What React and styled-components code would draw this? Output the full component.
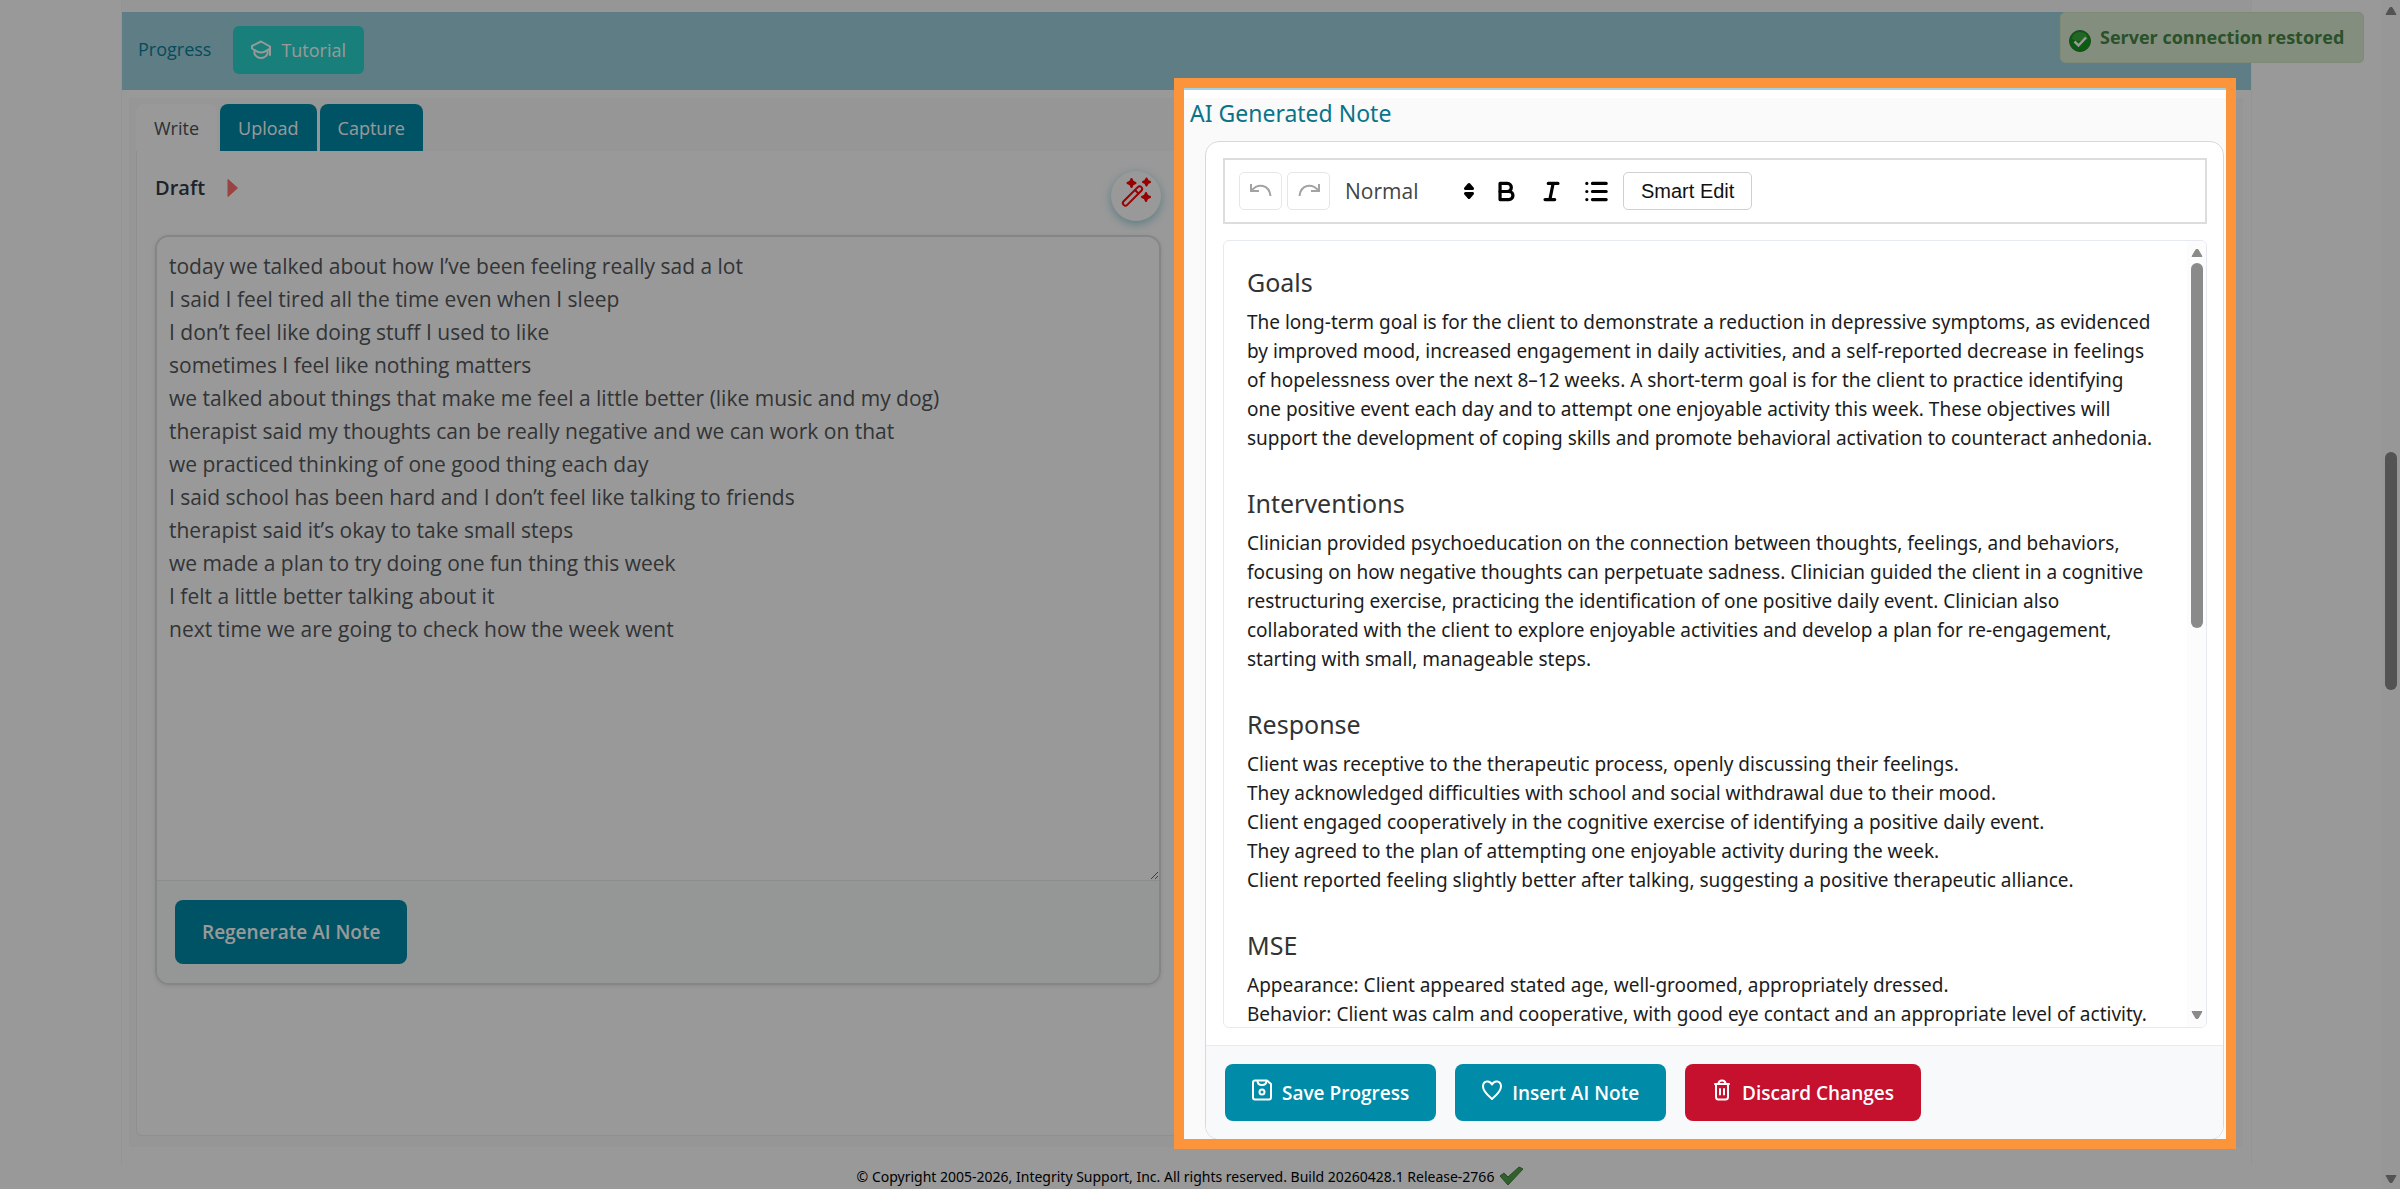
import React, { useState } from "react";
import styled, { createGlobalStyle } from "styled-components";

const GlobalStyle = createGlobalStyle`
  * {
    box-sizing: border-box;
  }
  body {
    margin: 0;
    overflow: hidden;
    background: #fff;
    font-family: "Open Sans", "Noto Sans", sans-serif;
    color: #212529;
  }
  button, select, textarea {
    font-family: inherit;
  }
  h2, h3, p {
    margin: 0;
  }
`;

const draftText = `today we talked about how I’ve been feeling really sad a lot
I said I feel tired all the time even when I sleep
I don’t feel like doing stuff I used to like
sometimes I feel like nothing matters
we talked about things that make me feel a little better (like music and my dog)
therapist said my thoughts can be really negative and we can work on that
we practiced thinking of one good thing each day
I said school has been hard and I don’t feel like talking to friends
therapist said it’s okay to take small steps
we made a plan to try doing one fun thing this week
I felt a little better talking about it
next time we are going to check how the week went`;

const sections = [
  {
    title: "Goals",
    lines: [
      "The long-term goal is for the client to demonstrate a reduction in depressive symptoms, as evidenced by improved mood, increased engagement in daily activities, and a self-reported decrease in feelings of hopelessness over the next 8–12 weeks. A short-term goal is for the client to practice identifying one positive event each day and to attempt one enjoyable activity this week. These objectives will support the development of coping skills and promote behavioral activation to counteract anhedonia.",
    ],
  },
  {
    title: "Interventions",
    lines: [
      "Clinician provided psychoeducation on the connection between thoughts, feelings, and behaviors, focusing on how negative thoughts can perpetuate sadness. Clinician guided the client in a cognitive restructuring exercise, practicing the identification of one positive daily event. Clinician also collaborated with the client to explore enjoyable activities and develop a plan for re-engagement, starting with small, manageable steps.",
    ],
  },
  {
    title: "Response",
    lines: [
      "Client was receptive to the therapeutic process, openly discussing their feelings.",
      "They acknowledged difficulties with school and social withdrawal due to their mood.",
      "Client engaged cooperatively in the cognitive exercise of identifying a positive daily event.",
      "They agreed to the plan of attempting one enjoyable activity during the week.",
      "Client reported feeling slightly better after talking, suggesting a positive therapeutic alliance.",
    ],
  },
  {
    title: "MSE",
    lines: [
      "Appearance: Client appeared stated age, well-groomed, appropriately dressed.",
      "Behavior: Client was calm and cooperative, with good eye contact and an appropriate level of activity.",
    ],
  },
];

const tabs = ["Write", "Upload", "Capture"];

/* icons */

const CapIcon = () => (
  <svg width="20" height="20" viewBox="0 0 20 20" fill="none" stroke="currentColor" strokeWidth="2" strokeLinejoin="round" strokeLinecap="round">
    <path d="M19 15V6.500L10 1.500 1 6v2.500l5 3q4 2 8 0l5-3" />
    <path d="M3.500 10.500V14q2.500 4 6.500 4t6.500-4v-3.500" />
  </svg>
);

const WandIcon = () => (
  <svg width="30" height="30" viewBox="0 0 30 30">
    <g fill="none" stroke="#f00" strokeWidth="2" strokeLinejoin="round">
      <rect x="-2.500" y="-12.500" width="5" height="25" rx="2.500" transform="translate(11.500 19) rotate(45)" />
      <path d="m14 13 3.500 3.500" />
    </g>
    <g fill="#f00" stroke="#f00" strokeWidth="2" strokeLinejoin="round">
      <path d="m10.500 2 1.300 2.700L14.500 6l-2.700 1.300-1.300 2.700-1.300-2.700L6.500 6l2.700-1.300z" />
      <path d="m25.500 1.500 1.200 2.300L29 5l-2.300 1.200-1.200 2.300-1.200-2.300L22 5l2.300-1.200z" />
      <path d="m25 16 1.300 2.700L29 20l-2.700 1.300L25 24l-1.300-2.700L21 20l2.700-1.300z" />
    </g>
  </svg>
);

const UndoIcon = ({ flip }) => (
  <svg width="24" height="18" viewBox="0 0 24 18" fill="none" stroke="#a3a3a3" strokeWidth="2">
    <g transform={flip ? "translate(24 0) scale(-1 1)" : undefined}>
      <path d="M2 2v7h8" />
      <path d="M2.500 8.500C9 1 20 2 21.500 14" />
    </g>
  </svg>
);

const BoldIcon = () => (
  <svg width="29" height="29" viewBox="0 0 18 18" fill="none" stroke="#000" strokeWidth="2" strokeLinejoin="round">
    <path d="M5 4h4.500a2.500 2.500 0 0 1 0 5H5z" />
    <path d="M5 9h5.500a2.500 2.500 0 0 1 0 5H5z" />
  </svg>
);

const ItalicIcon = () => (
  <svg width="29" height="29" viewBox="0 0 18 18" fill="none" stroke="#000" strokeWidth="2" strokeLinecap="round">
    <path d="M7 4h6M5 14h6M8 14l2-10" />
  </svg>
);

const ListIcon = () => (
  <svg width="29" height="29" viewBox="0 0 18 18" fill="none" stroke="#000" strokeWidth="2" strokeLinecap="round">
    <path d="M6.500 4H15M6.500 9H15M6.500 14H15M3 4h0M3 9h0M3 14h0" />
  </svg>
);

const SaveIcon = () => (
  <svg width="20" height="22" viewBox="0 0 20 22" fill="none" stroke="currentColor" strokeWidth="2" strokeLinejoin="round">
    <path d="M3 1.500h12L19 5v13.500q0 2-2 2H3q-2 0-2-2v-15q0-2 2-2z" />
    <path d="M5.500 1.500q0 4.500 4.500 4.500t4.500-4.500" />
    <circle cx="10" cy="13" r="2.500" />
  </svg>
);

const HeartIcon = () => (
  <svg width="20" height="22" viewBox="0 0 20 22" fill="none" stroke="currentColor" strokeWidth="2" strokeLinejoin="round">
    <path d="M10 20C6 16.500 1 12.500 1 7.500 1 2 7.500.500 10 5.500 12.500.500 19 2 19 7.500 19 12.500 14 16.500 10 20z" />
  </svg>
);

const TrashIcon = () => (
  <svg width="20" height="22" viewBox="0 0 20 22" fill="none" stroke="currentColor" strokeWidth="2" strokeLinejoin="round" strokeLinecap="round">
    <path d="M3 5h14M4 5v13q0 2.500 2.500 2.500h7q2.500 0 2.500-2.500V5M6.500 5q0-3.500 3.500-3.500T13.500 5" />
    <path d="M8 10v5.500M12 10v5.500" />
  </svg>
);

const OkIcon = () => (
  <svg width="22" height="22" viewBox="0 0 22 22">
    <circle cx="11" cy="11" r="10.500" fill="#129a1c" stroke="#2b7a2f" />
    <path d="M3 9a8 7 0 0 1 16 0q-8 4-16 0z" fill="#5ab85c" opacity=".6" />
    <path d="m5.500 11.500 4 4 7.500-8" fill="none" stroke="#fff" strokeWidth="2.500" />
  </svg>
);

const TickIcon = () => (
  <svg width="26" height="20" viewBox="0 0 26 20">
    <path d="m1 10 4-3 4 4L20 1l4 2L9 19z" fill="#53a14b" stroke="#3d7f38" />
  </svg>
);

const Arrow = ({ down }) => (
  <svg width="12" height="10" viewBox="0 0 12 10">
    <path d={down ? "M1 1.500h10L7 8.500H5z" : "M5 1.500h2l4 7H1z"} fill="#8a8a8a" stroke="#8a8a8a" strokeLinejoin="round" />
  </svg>
);

const App = () => {
  const [activeTab, setActiveTab] = useState("Write");
  const [draft, setDraft] = useState(draftText);

  return (
    <Page>
      <GlobalStyle />
      <Main>
        <Container>
          <Header>
            <HeaderTitle>Progress</HeaderTitle>
            <TutorialButton type="button">
              <CapIcon />
              Tutorial
            </TutorialButton>
          </Header>
          <Content>
            <DraftColumn>
              <Tabs>
                {tabs.map((tab) => (
                  <Tab key={tab} type="button" $active={tab === activeTab} onClick={() => setActiveTab(tab)}>
                    {tab}
                  </Tab>
                ))}
              </Tabs>
              <Panel>
                <DraftHeader>
                  <DraftLabel htmlFor="draft">Draft</DraftLabel>
                  <PlayButton type="button" aria-label="Play">
                    <svg width="11" height="20" viewBox="0 0 11 20">
                      <path d="M1 1.500 10.500 10 1 18.500z" fill="#ff7070" stroke="#ff7070" strokeLinejoin="round" />
                    </svg>
                  </PlayButton>
                  <WandButton type="button" aria-label="Magic tools">
                    <WandIcon />
                  </WandButton>
                </DraftHeader>
                <DraftBox>
                  <DraftInput id="draft" value={draft} spellCheck="false" onChange={(e) => setDraft(e.target.value)} />
                  <DraftFooter>
                    <ActionButton type="button" $tall>
                      Regenerate AI Note
                    </ActionButton>
                  </DraftFooter>
                </DraftBox>
              </Panel>
            </DraftColumn>

            <NoteColumn>
              <NoteTitle>AI Generated Note</NoteTitle>
              <NoteCard>
                <NoteBody>
                  <Toolbar>
                    <ToolButton type="button" aria-label="Undo">
                      <UndoIcon />
                    </ToolButton>
                    <ToolButton type="button" aria-label="Redo">
                      <UndoIcon flip />
                    </ToolButton>
                    <FormatPicker>
                      <select aria-label="Text style" defaultValue="Normal">
                        <option>Normal</option>
                        <option>Heading</option>
                      </select>
                      <svg width="12" height="20" viewBox="0 0 12 20">
                        <path d="m6 3.500 3.500 4h-7zM6 16.500l3.500-4h-7z" fill="#000" stroke="#000" strokeWidth="3" strokeLinejoin="round" />
                      </svg>
                    </FormatPicker>
                    <PlainButton type="button" aria-label="Bold">
                      <BoldIcon />
                    </PlainButton>
                    <PlainButton type="button" aria-label="Italic">
                      <ItalicIcon />
                    </PlainButton>
                    <PlainButton type="button" aria-label="Bullet list">
                      <ListIcon />
                    </PlainButton>
                    <SmartEdit type="button">Smart Edit</SmartEdit>
                  </Toolbar>
                  <Editor>
                    <EditorText>
                      {sections.map((section) => (
                        <Section key={section.title}>
                          <h3>{section.title}</h3>
                          {section.lines.map((line) => (
                            <p key={line}>{line}</p>
                          ))}
                        </Section>
                      ))}
                    </EditorText>
                    <EditorScroll>
                      <Arrow />
                      <Track $before={0} $thumb={364} $after={376}>
                        <span />
                      </Track>
                      <Arrow down />
                    </EditorScroll>
                  </Editor>
                </NoteBody>
                <NoteFooter>
                  <ActionButton type="button">
                    <SaveIcon />
                    Save Progress
                  </ActionButton>
                  <ActionButton type="button">
                    <HeartIcon />
                    Insert AI Note
                  </ActionButton>
                  <ActionButton type="button" $danger>
                    <TrashIcon />
                    Discard Changes
                  </ActionButton>
                </NoteFooter>
              </NoteCard>
              <Spotlight />
            </NoteColumn>
          </Content>
        </Container>
        <Footer>
          © Copyright 2005-2026, Integrity Support, Inc. All rights reserved. Build 20260428.1 Release-2766
          <TickIcon />
        </Footer>
      </Main>
      <PageScroll>
        <Arrow />
        <Track $before={432} $thumb={239} $after={480}>
          <span />
        </Track>
        <Arrow down />
      </PageScroll>
      <Toast role="status">
        <OkIcon />
        <span>Server connection restored</span>
      </Toast>
    </Page>
  );
};

const Page = styled.div`
  position: relative;
  display: flex;
  height: 100vh;
  overflow: hidden;
`;

const Main = styled.main`
  flex: 1;
  min-width: 0;
`;

const Container = styled.div`
  margin: 0 130px 0 121px;
  padding-bottom: 18px;
  border: 1px solid #f7f7f7;
  border-width: 0 1px;
`;

const Header = styled.header`
  display: flex;
  align-items: center;
  gap: 22px;
  height: 90px;
  padding: 0 16px 2px;
  background: #9fd1de;
  border-top: 12px solid #fbfbfb;
`;

const HeaderTitle = styled.h2`
  padding-bottom: 2px;
  font-size: 18px;
  font-weight: 500;
  line-height: 24px;
  color: #05809a;
`;

const TutorialButton = styled.button`
  display: flex;
  align-items: center;
  gap: 10px;
  height: 48px;
  padding: 0 18px;
  border: none;
  border-radius: 6px;
  background: #28d4cb;
  color: #fff;
  font-size: 18px;
  font-weight: 500;
`;

const Content = styled.div`
  display: grid;
  grid-template-columns: 1fr 1fr;
  gap: 6px;
  margin: 8px 8px 0 7px;
  padding: 0 17px 0 7px;
  background: #fafafa;
`;

const DraftColumn = styled.section`
  display: flex;
  flex-direction: column;
  min-width: 0;
  padding: 6px 0 11px;
`;

const Tabs = styled.nav`
  display: flex;
  gap: 3px;
`;

const Tab = styled.button`
  height: 47px;
  padding: 0 18px;
  border: none;
  border-radius: 8px 8px 0 0;
  background: ${({ $active }) => ($active ? "#fff" : "#008ba8")};
  color: ${({ $active }) => ($active ? "#495057" : "#fff")};
  font-size: 18px;
  font-weight: ${({ $active }) => ($active ? 400 : 500)};
`;

const Panel = styled.div`
  flex: 1;
  padding: 0 16px 0 18px;
  border: 1px solid #eee;
  border-top: none;
  border-radius: 0 0 6px 6px;
  background: #fff;
`;

const DraftHeader = styled.div`
  display: flex;
  gap: 22px;
  height: 84px;
  padding-top: 20px;
`;

const DraftLabel = styled.label`
  font-size: 20px;
  font-weight: 600;
  line-height: 34px;
  color: #333a46;
`;

const PlayButton = styled.button`
  display: flex;
  align-items: center;
  height: 34px;
  padding: 0;
  border: none;
  background: none;
`;

const WandButton = styled.button`
  display: grid;
  place-items: center;
  width: 50px;
  height: 50px;
  margin-left: auto;
  padding: 0 0 9px;
  border: none;
  border-radius: 50%;
  background: #fff;
  box-shadow: 0 3px 10px rgba(0, 139, 168, 0.4);
`;

const DraftBox = styled.div`
  display: flex;
  flex-direction: column;
  overflow: hidden;
  border: 2px solid #dcdee2;
  border-radius: 14px;
  box-shadow: 0 1px 4px rgba(0, 0, 0, 0.1);
`;

const DraftInput = styled.textarea`
  height: 643px;
  padding: 13px 12px;
  border: none;
  outline: none;
  resize: vertical;
  background: #fff;
  color: #54575b;
  font-size: 21px;
  line-height: 33px;
`;

const DraftFooter = styled.div`
  padding: 19px 18px;
  border-top: 1px solid #e9ecef;
  background: #f9fafa;
`;

const ActionButton = styled.button`
  display: flex;
  align-items: center;
  gap: 10px;
  height: ${({ $tall }) => ($tall ? 64 : 57)}px;
  padding: 0 27px;
  border: none;
  border-radius: 8px;
  background: ${({ $danger }) => ($danger ? "#c5102e" : "#008ba8")};
  color: #fff;
  font-size: 19px;
  font-weight: 600;

  svg {
    margin-bottom: 5px;
  }
`;

const NoteColumn = styled.section`
  position: relative;
  min-width: 0;
  padding-bottom: 7px;
`;

const NoteTitle = styled.h2`
  margin: 0 0 13px 6px;
  font-family: "Noto Sans", sans-serif;
  font-size: 23px;
  font-weight: 400;
  line-height: 30px;
  color: #0a7388;
`;

const NoteCard = styled.div`
  margin: 0 2px 0 21px;
  overflow: hidden;
  border: 1px solid #d5dae1;
  border-radius: 14px;
  background: #fff;
`;

const NoteBody = styled.div`
  padding: 16px 16px 17px 17px;
`;

const Toolbar = styled.div`
  display: flex;
  align-items: center;
  gap: 5px;
  margin-bottom: 16px;
  padding: 12px 14px;
  border: 2px solid #ddd;
`;

const PlainButton = styled.button`
  display: grid;
  place-items: center;
  width: 40px;
  height: 38px;
  padding: 0;
  border: none;
  background: none;
`;

const ToolButton = styled(PlainButton)`
  width: 43px;
  border: 1px solid #e6e6e6;
  border-radius: 5px;
`;

const SmartEdit = styled.button`
  height: 38px;
  margin-left: 2px;
  padding: 0 17px;
  border: 1px solid #d0d0d0;
  border-radius: 5px;
  background: #fff;
  color: #111;
  font-family: "Liberation Sans", sans-serif;
  font-size: 20px;
`;

const FormatPicker = styled.label`
  display: flex;
  align-items: center;
  margin: 0 6px 0 10px;

  select {
    width: 118px;
    padding: 0;
    border: none;
    outline: none;
    appearance: none;
    background: none;
    color: #444;
    font-size: 21px;
    font-weight: 500;
  }
`;

const Editor = styled.div`
  display: flex;
  height: 788px;
  overflow: hidden;
  border: 1px solid #e7e9f0;
  border-radius: 6px;
`;

const EditorText = styled.article`
  flex: 1;
  padding: 26px 26px 0 23px;
`;

const Section = styled.section`
  margin-bottom: 35px;

  h3 {
    margin-bottom: 11px;
    font-family: "Noto Sans", sans-serif;
    font-size: 25px;
    font-weight: 400;
    line-height: 30px;
    color: #333;
  }
  p {
    font-family: "Noto Sans", sans-serif;
    font-size: 19px;
    line-height: 29px;
    color: #1c1c1c;
  }
`;

const EditorScroll = styled.div`
  display: flex;
  flex-direction: column;
  align-items: center;
  width: 19px;
  padding: 7px 0;
  background: #fcfcfc;
`;

const PageScroll = styled(EditorScroll)`
  width: 18px;
  padding: 6px 0 5px;
`;

const Track = styled.div`
  display: flex;
  flex: 1;
  flex-direction: column;
  padding: 5px 0;

  &::before {
    content: "";
    flex: ${({ $before }) => $before} 0 0;
  }
  &::after {
    content: "";
    flex: ${({ $after }) => $after} 0 0;
  }
  span {
    flex: ${({ $thumb }) => $thumb} 0 0;
    width: 12px;
    border-radius: 6px;
    background: #8a8a8a;
  }
`;

const NoteFooter = styled.div`
  display: flex;
  gap: 19px;
  padding: 18px 19px;
  border-top: 1px solid #e9ebef;
  background: #f8f9fb;
`;

/* dims the whole page except the note column */
const Spotlight = styled.div`
  position: absolute;
  inset: -20px -10px -2px;
  border: 10px solid #fc943c;
  box-shadow: 0 0 0 3000px rgba(0, 0, 0, 0.4);
  pointer-events: none;
  z-index: 5;
`;

const Footer = styled.footer`
  display: flex;
  align-items: center;
  justify-content: center;
  gap: 5px;
  height: 22px;
  color: #000;
  font-family: "Noto Sans", sans-serif;
  font-size: 14px;
`;

const Toast = styled.div`
  position: absolute;
  top: 12px;
  right: 36px;
  display: flex;
  gap: 9px;
  width: 304px;
  height: 51px;
  padding: 0 8px;
  border: 1px solid #d3e6c4;
  border-radius: 5px;
  background: #daedd2;
  color: #468847;
  font-size: 18px;
  font-weight: 700;
  line-height: 48px;

  svg {
    margin-top: 17px;
  }
`;

export default App;
